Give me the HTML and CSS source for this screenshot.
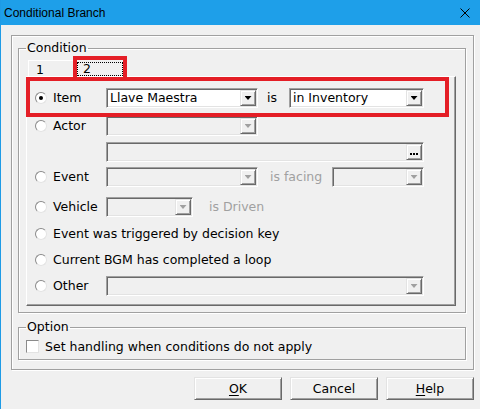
FILE: index.html
```html
<!DOCTYPE html>
<html>
<head>
<meta charset="utf-8">
<link rel="stylesheet" href="styles.css">
</head>
<body>
<div class="window">
  <div class="titlebar">
    <span class="title">Conditional Branch</span>
    <svg class="close" width="10" height="10" viewBox="0 0 10 10"><path d="M0.5 0.5L9.5 9.5M9.5 0.5L0.5 9.5" stroke="#000" stroke-width="1" fill="none"/></svg>
  </div>
  <div class="client">
    <div class="frame">
      <fieldset class="group cond">
        <legend>Condition</legend>
        <div class="tabs">
          <div class="tab">1</div>
          <div class="tab active"><span class="focus">2</span></div>
        </div>
        <div class="page">
          <div class="row r-item">
            <span class="radio on"></span><span class="lbl">Item</span>
            <div class="combo w152"><span class="val">Llave Maestra</span><span class="drop"><i class="tri"></i></span></div>
            <span class="mid">is</span>
            <div class="combo w135"><span class="val">in Inventory</span><span class="drop"><i class="tri"></i></span></div>
          </div>
          <div class="row r-actor">
            <span class="radio"></span><span class="lbl">Actor</span>
            <div class="combo dis w152"><span class="val"></span><span class="drop"><i class="tri"></i></span></div>
          </div>
          <div class="row r-sub">
            <div class="combo dis w318 sub"><span class="val"></span><span class="drop"><svg class="dots" width="8" height="2" viewBox="0 0 8 2"><rect x="0" y="0" width="2" height="2" fill="#000"/><rect x="3" y="0" width="2" height="2" fill="#000"/><rect x="6" y="0" width="2" height="2" fill="#000"/></svg></span></div>
          </div>
          <div class="row r-event">
            <span class="radio"></span><span class="lbl">Event</span>
            <div class="combo dis w152"><span class="val"></span><span class="drop"><i class="tri"></i></span></div>
            <span class="mid gray facing">is facing</span>
            <div class="combo dis w92"><span class="val"></span><span class="drop"><i class="tri"></i></span></div>
          </div>
          <div class="row r-vehicle">
            <span class="radio"></span><span class="lbl">Vehicle</span>
            <div class="combo dis w87"><span class="val"></span><span class="drop"><i class="tri"></i></span></div>
            <span class="gray driven">is Driven</span>
          </div>
          <div class="row r-dec">
            <span class="radio"></span><span class="text">Event was triggered by decision key</span>
          </div>
          <div class="row r-bgm">
            <span class="radio"></span><span class="text">Current BGM has completed a loop</span>
          </div>
          <div class="row r-other">
            <span class="radio"></span><span class="lbl">Other</span>
            <div class="combo dis w318"><span class="val"></span><span class="drop"><i class="tri"></i></span></div>
          </div>
        </div>
      </fieldset>
      <fieldset class="group option">
        <legend>Option</legend>
        <div class="checkrow"><span class="check"></span><span class="text">Set handling when conditions do not apply</span></div>
      </fieldset>
    </div>
    <div class="buttons">
      <div class="btn"><u>O</u>K</div>
      <div class="btn">Cancel</div>
      <div class="btn"><u>H</u>elp</div>
    </div>
  </div>
  <div class="mark mark-tab"></div>
  <div class="mark mark-row"></div>
</div>
</body>
</html>
```
FILE: styles.css
```css
* { box-sizing: border-box; }
html, body { margin: 0; padding: 0; }
body {
  width: 480px; height: 409px; overflow: hidden;
  background: #f0f0f0;
  font-family: "DejaVu Sans", sans-serif;
  font-size: 12.5px; line-height: 14px; color: #000;
}
.window {
  position: relative;
  width: 480px; height: 409px;
  border-left: 1px solid #1e9be6;
  background: #f0f0f0;
}
.titlebar {
  height: 25px;
  background: #1e9fe9;
  display: flex; align-items: center;
  padding-left: 3px; padding-right: 10px;
}
.title {
  font-family: "Liberation Sans", sans-serif;
  font-size: 12px;
}
.close { margin-left: auto; display: block; }
.client { padding: 10px 6px 0 10px; }
.frame {
  border: 1px solid #a0a0a0;
  box-shadow: 1px 1px 0 #fff, inset 1px 1px 0 #fff;
  padding: 5px 7px 9px 6px;
}
.group {
  margin: 0; min-width: 0;
  border: 1px solid #a0a0a0;
  box-shadow: 1px 1px 0 #fff, inset 1px 1px 0 #fff;
}
.group legend { padding: 0 1px; line-height: 14px; }
.cond { padding: 0 9px 6px 7px; }
.option { margin-top: 7px; padding: 0 7px 6px 7px; }

.tabs { display: flex; height: 20px; margin-top: 1px; align-items: flex-end; }
.tab {
  height: 16px; width: 46px; margin-left: 2px;
  padding: 2px 0 0 7px;
  border-left: 1px solid #fff; border-top: 1px solid #fff;
  border-right: 1px solid #c8c8c8;
}
.tab.active {
  position: relative;
  width: 50px; height: 20px; margin-left: 0;
  padding: 5px 0 0 2px;
}
.focus {
  display: block; width: 46px; height: 14px;
  border: 1px dotted #000;
  padding-left: 5px; line-height: 11px;
}

.page {
  border: 1px solid;
  border-color: #fff #696969 #696969 #fff;
  box-shadow: inset -1px -1px 0 #a0a0a0;
  padding-bottom: 9px;
}
.row { display: flex; align-items: center; height: 20px; padding-left: 8px; }
.r-item { margin-top: 11px; }
.r-actor { margin-top: 8px; }
.r-sub { margin-top: 6px; padding-left: 79px; }
.r-event { margin-top: 5px; }
.r-vehicle { margin-top: 10px; }
.r-dec { margin-top: 7px; }
.r-bgm { margin-top: 6px; }
.r-other { margin-top: 6px; }

.radio {
  width: 12px; height: 12px; flex: none;
  border-radius: 50%;
  background: #fff;
  border: 1px solid;
  border-color: #8a8a8a #e3e3e3 #e3e3e3 #8a8a8a;
  margin-right: 6px;
  display: flex; align-items: center; justify-content: center;
}
.radio.on::after {
  content: ""; width: 4px; height: 4px; border-radius: 50%; background: #000;
}
.lbl { width: 53px; flex: none; }
.text { white-space: nowrap; }
.mid { flex: none; width: 31px; padding-left: 9px; }
.facing { width: 74px; padding-left: 12px; }
.driven { margin-left: 16px; }
.gray { color: #a0a0a0; }

.combo {
  display: flex; height: 20px; flex: none;
  border: 1px solid;
  border-color: #a0a0a0 #fff #fff #a0a0a0;
  box-shadow: inset 1px 1px 0 #696969, inset -1px -1px 0 #e3e3e3;
  background: #fff;
  padding: 1px;
}
.combo.dis { background: #f0f0f0; }
.w152 { width: 152px; }
.w135 { width: 135px; }
.w318 { width: 318px; }
.w92 { width: 92px; }
.w87 { width: 87px; }
.val { flex: 1; padding-left: 2px; line-height: 16px; white-space: nowrap; overflow: hidden; }
.drop {
  width: 16px; height: 16px; flex: none;
  background: #f0f0f0;
  border: 1px solid;
  border-color: #e3e3e3 #696969 #696969 #e3e3e3;
  box-shadow: inset 1px 1px 0 #fff, inset -1px -1px 0 #a0a0a0;
  display: flex; align-items: center; justify-content: center;
}
.tri {
  display: block; width: 7px; height: 4px; background: #000;
  clip-path: polygon(0 0, 100% 0, 50% 100%);
}
.dis .tri { background: #a0a0a0; }
.sub .drop { align-items: flex-end; padding-bottom: 4px; }
.dots { display: block; }

.checkrow { display: flex; align-items: center; height: 13px; margin-top: 6px; padding-left: 0; }
.check {
  width: 13px; height: 13px; flex: none;
  background: #fff;
  border: 1px solid;
  border-color: #8a8a8a #e3e3e3 #e3e3e3 #8a8a8a;
  margin-right: 6px;
}

.buttons { display: flex; justify-content: flex-end; gap: 8px; margin-top: 7px; }
.btn {
  width: 88px; height: 23px;
  border: 1px solid;
  border-color: #e3e3e3 #696969 #696969 #e3e3e3;
  box-shadow: inset 1px 1px 0 #fff, inset -1px -1px 0 #a0a0a0;
  background: #f0f0f0;
  display: flex; align-items: center; justify-content: center;
}
.btn u { text-decoration: underline; text-underline-offset: 2px; }

.mark { position: absolute; border: 4px solid #e41e26; }
.mark-tab { left: 72px; top: 56px; width: 54px; height: 25px; }
.mark-row { left: 25px; top: 77px; width: 423px; height: 40px; }
```
